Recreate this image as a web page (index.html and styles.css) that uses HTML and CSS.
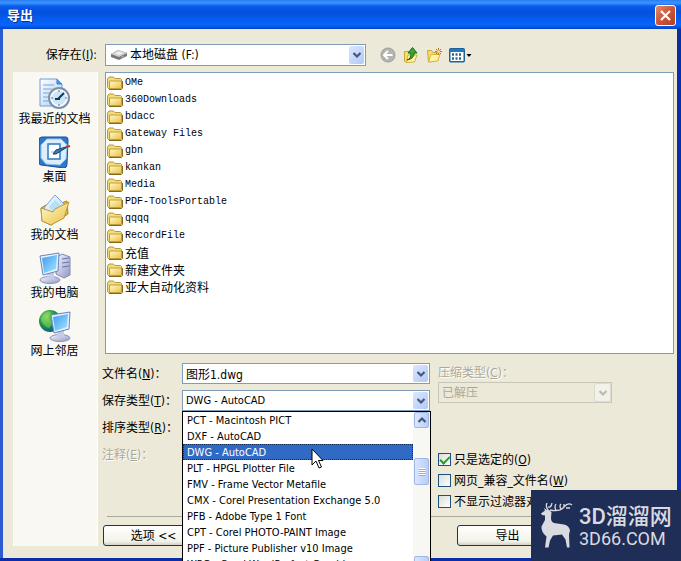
FILE: index.html
```html
<!DOCTYPE html>
<html lang="zh-CN">
<head>
<meta charset="utf-8">
<title>导出</title>
<meta name="viewport" content="width=device-width, initial-scale=1">
<link rel="stylesheet" href="styles.css">
</head>
<body>
<svg class="defs" aria-hidden="true">
  <defs>
    <linearGradient id="gFolder" x1="0" y1="0" x2="1" y2="1"><stop offset="0" stop-color="#fffbc8"/><stop offset="1" stop-color="#e9bf48"/></linearGradient>
    <linearGradient id="gScreen" x1="0" y1="0" x2="1" y2="1"><stop offset="0" stop-color="#3f9bf0"/><stop offset="1" stop-color="#a4e6ff"/></linearGradient>
    <linearGradient id="gPaper" x1="0" y1="0" x2="1" y2="1"><stop offset="0" stop-color="#ffffff"/><stop offset="1" stop-color="#a9cdf3"/></linearGradient>
    <linearGradient id="gMetal" x1="0" y1="0" x2="1" y2="1"><stop offset="0" stop-color="#f5f6ff"/><stop offset="1" stop-color="#8f97c4"/></linearGradient>
    <radialGradient id="gGlobe" cx=".35" cy=".3" r=".8"><stop offset="0" stop-color="#8ee05a"/><stop offset=".5" stop-color="#1f9440"/><stop offset="1" stop-color="#0b4fa0"/></radialGradient>
    <symbol id="folder" viewBox="0 0 16 16">
      <path d="M.5 12.500V4L2 2h4.500L8 3.500h5.500l1 1V12l-1 2H2z" fill="#f3dc7c" stroke="#b8973a"/>
      <path d="M2.500 6h12v6.500l-1 1h-11z" fill="url(#gFolder)" stroke="#c29d3c"/>
      <path d="M15.500 6v7.500l-1.500 1H2" fill="none" stroke="#85691f"/>
    </symbol>
    <symbol id="chevron" viewBox="0 0 10 8"><path d="M1.500 2L5 5.500L8.500 2" fill="none" stroke="currentColor" stroke-width="2.200"/></symbol>
  </defs>
</svg>
<main class="dialog">
  <header class="titlebar">
    <h1>导出</h1>
    <button class="close" type="button" aria-label="关闭"><svg viewBox="0 0 19 19"><path d="M5 5l9 9M14 5l-9 9" stroke="#fff" stroke-width="2.200"/></svg></button>
  </header>
  <form class="body">
    <div class="lookin">
      <label for="place">保存在(<u>I</u>):</label>
      <div class="combo combo-place">
        <svg class="drive" viewBox="0 0 16 10"><path d="M0 4l7-4 9 3v3l-8 4-8-3z" fill="#777"/><path d="M0 4l7-4 9 3-8 4z" fill="#d0d0d0"/><path d="M4 3.500l4-2 4 1.500-4 2z" fill="#f2f2f2"/><path d="M10 7.500l3-1.500" stroke="#8cda70"/></svg>
        <select id="place"><option>本地磁盘 (F:)</option></select>
        <span class="arrow"><svg><use href="#chevron"/></svg></span>
      </div>
      <div class="tools">
        <button type="button" aria-label="后退"><svg viewBox="0 0 16 16"><circle cx="8" cy="8" r="7" fill="#b4b4b0" stroke="#9c9c98"/><path d="M12.500 8H4.500M8 4L4 8l4 4" fill="none" stroke="#fff" stroke-width="2"/></svg></button>
        <button type="button" aria-label="向上"><svg viewBox="0 0 16 16"><path d="M1.500 4.500h4l1 1.500h5v7L3 15.500 1.500 14z" fill="#f9e06c" stroke="#c9a638"/><path d="M3 15.500L5 8h9l-2.500 7z" fill="#fff3a0" stroke="#d3b040"/><path d="M4 13q4-1 4-7H5L9.500.500 14 6h-3q0 6-7 7z" fill="#39a836" stroke="#176c1b"/></svg></button>
        <button type="button" aria-label="新建文件夹"><svg viewBox="0 0 16 16"><path d="M1.500 3.500h4l1.500 2h5v8L2.500 15z" fill="#f7dc68" stroke="#cda43a"/><path d="M2.500 15L5 7.500h9L11.500 14z" fill="#fff5a5" stroke="#d9b348"/><path d="M12.500 1v7M9 4.500h7M10 2l5 5M15 2l-5 5" stroke="#c26c2b"/><circle cx="12.500" cy="4.500" r="1.500" fill="#ffe46c"/></svg></button>
        <button type="button" class="views" aria-label="查看"><svg viewBox="0 0 23 16"><rect x=".75" y="1.750" width="14.500" height="13" rx="1" fill="#fff" stroke="#1c639c" stroke-width="1.500"/><path d="M1 3.500h14" stroke="#2379bb" stroke-width="3"/><path d="M3 7.500h2m1.500 0h2m1.500 0h2M3 11.500h2m1.500 0h2m1.500 0h2" stroke="#2c6290" stroke-width="2.500"/><path d="M17.500 7h5L20 10z" fill="#000"/></svg></button>
      </div>
    </div>
    <div class="work">
      <nav class="places" aria-label="位置">
        <a href="#recent"><svg viewBox="0 0 32 32"><path d="M1 1h17l5 5v22H1z" fill="url(#gPaper)" stroke="#6f9ddb"/><path d="M18 1v5h5" fill="#4f95e2" stroke="#3d7cc9"/><path d="M4 7h11M4 11h9M4 15h6M4 19h5M4 23h5" stroke="#77a5df"/><circle cx="20" cy="20" r="10" fill="#edf7ff" stroke="#7d8fa8" stroke-width="2"/><circle cx="20" cy="20" r="7.500" fill="#c8e7fa" stroke="#fff"/><path d="M25 15l-6 6M16 21h5" stroke="#16394f" stroke-width="2"/><path d="M20 12v2M20 26v2M12 20h2M26 20h2" stroke="#667"/></svg><span>我最近的文档</span></a>
        <a href="#desktop"><svg viewBox="0 0 32 32"><path d="M3 1h24q2 0 2 3l-1 24q0 4-3 4l-23-3q-2 0-2-3V4q0-3 3-3z" fill="#2f79cc" stroke="#1b4f96"/><path d="M8 3h14l6 6-1 14-6 6-14-1-5-6V9z" fill="#dceefb" stroke="#8fc1ed"/><path d="M9 8h12v15H9z" fill="#fff" stroke="#2e78c2" stroke-width="1.500"/><path d="M12 16h5" stroke="#8bbde8"/><path d="M14 18l3-4 13-4-13 8z" fill="#397eb7" stroke="#163d68"/><path d="M27 11l4-1" stroke="#c23b1a" stroke-width="2"/></svg><span>桌面</span></a>
        <a href="#documents"><svg viewBox="0 0 32 32"><path d="M2 14l5-3 3 2 18-6 1 13-17 11-9-4z" fill="#e5bc42" stroke="#a9842d"/><path d="M5 14L16 1l11 11-11 13z" fill="url(#gPaper)" stroke="#79a8d9"/><path d="M10 13l6-7 5 5-6 7z" fill="#b3e1f3"/><path d="M2 14l12 4 2-3 14-7-5 16-13 7-9-4z" fill="url(#gFolder)" stroke="#bf9736"/></svg><span>我的文档</span></a>
        <a href="#computer"><svg viewBox="0 0 32 32"><path d="M18 5l5-3 8 3v18l-6 3-8-4z" fill="url(#gMetal)" stroke="#8389b0"/><path d="M23 7l7-1M23 11l7-1M23 15l7-1" stroke="#6b72a6"/><ellipse cx="11" cy="28" rx="10" ry="3.500" fill="url(#gMetal)" stroke="#8c93bd"/><path d="M8 21h7v6H8z" fill="#c6cbe7"/><path d="M1 4l19-3-1 18-15 4z" fill="#e6f1ff" stroke="#6784b9"/><path d="M3 6l15-3-1 14-12 4z" fill="url(#gScreen)"/></svg><span>我的电脑</span></a>
        <a href="#network"><svg viewBox="0 0 32 32"><circle cx="11" cy="11" r="11" fill="url(#gGlobe)"/><path d="M2 8q5-8 10-6l-3 6 5 5-4 5q-7-2-8-10" fill="#8bd66c" opacity=".55"/><ellipse cx="21" cy="28" rx="10" ry="3.500" fill="url(#gMetal)" stroke="#8c93bd"/><path d="M18 20h7v7h-7z" fill="#c6cbe7"/><path d="M12 5l19-3-1 17-15 4z" fill="#e6f1ff" stroke="#6784b9"/><path d="M14 7l15-3-1 13-12 4z" fill="url(#gScreen)"/></svg><span>网上邻居</span></a>
      </nav>
      <div class="content">
        <ul class="files">
          <li><svg><use href="#folder"/></svg>OMe</li>
          <li><svg><use href="#folder"/></svg>360Downloads</li>
          <li><svg><use href="#folder"/></svg>bdacc</li>
          <li><svg><use href="#folder"/></svg>Gateway Files</li>
          <li><svg><use href="#folder"/></svg>gbn</li>
          <li><svg><use href="#folder"/></svg>kankan</li>
          <li><svg><use href="#folder"/></svg>Media</li>
          <li><svg><use href="#folder"/></svg>PDF-ToolsPortable</li>
          <li><svg><use href="#folder"/></svg>qqqq</li>
          <li><svg><use href="#folder"/></svg>RecordFile</li>
          <li class="cjk"><svg><use href="#folder"/></svg>充值</li>
          <li class="cjk"><svg><use href="#folder"/></svg>新建文件夹</li>
          <li class="cjk"><svg><use href="#folder"/></svg>亚大自动化资料</li>
        </ul>
        <div class="options">
          <div class="fields">
            <label for="name">文件名(<u>N</u>)：</label>
            <div class="combo"><input id="name" type="text" value="图形1.dwg"><span class="arrow"><svg><use href="#chevron"/></svg></span></div>
            <label for="type">保存类型(<u>T</u>)：</label>
            <div class="combo">
              <select id="type"><option>DWG - AutoCAD</option></select>
              <span class="arrow"><svg><use href="#chevron"/></svg></span>
              <div class="popup">
                <ul role="listbox" aria-label="保存类型">
                  <li role="option">PCT - Macintosh PICT</li>
                  <li role="option">DXF - AutoCAD</li>
                  <li role="option" class="current" aria-selected="true">DWG - AutoCAD</li>
                  <li role="option">PLT - HPGL Plotter File</li>
                  <li role="option">FMV - Frame Vector Metafile</li>
                  <li role="option">CMX - Corel Presentation Exchange 5.0</li>
                  <li role="option">PFB - Adobe Type 1 Font</li>
                  <li role="option">CPT - Corel PHOTO-PAINT Image</li>
                  <li role="option">PPF - Picture Publisher v10 Image</li>
                  <li role="option">WPG - Corel WordPerfect Graphic</li>
                </ul>
                <div class="scroll">
                  <span class="step up"><svg><use href="#chevron"/></svg></span>
                  <span class="thumb"></span>
                  <span class="step down"><svg><use href="#chevron"/></svg></span>
                </div>
                <svg class="cursor" viewBox="0 0 13 21"><path d="M1 1v16l4-4 3 7 2.500-1-3-6.500H12z" fill="#fff" stroke="#000"/></svg>
              </div>
            </div>
            <span class="label">排序类型(<u>R</u>)：</span><span></span>
            <span class="label off">注释(<u>E</u>)：</span><span></span>
          </div>
          <div class="extras">
            <label class="off" for="zip">压缩类型(<u>C</u>)：</label>
            <div class="combo disabled"><select id="zip" disabled><option>已解压</option></select><span class="arrow"><svg><use href="#chevron"/></svg></span></div>
            <div class="checks">
              <label><input type="checkbox" checked>只是选定的(<u>O</u>)</label>
              <label><input type="checkbox">网页_兼容_文件名(<u>W</u>)</label>
              <label><input type="checkbox">不显示过滤器对话框</label>
            </div>
          </div>
        </div>
        <hr>
        <div class="actions">
          <button type="button">选项 &lt;&lt;</button>
          <button type="button">导出</button>
        </div>
      </div>
    </div>
  </form>
</main>
<aside class="brand">
  <svg viewBox="0 0 32 45">
    <path d="M0 10.500L4 7.500 3 5l3 2q3 0 4.500 2L10 15q0 4 3 5l10 1.500q5 1 6 6l-1 4 .5 13H26l-1.500-8-3.500-5-9 1-3 5-1.500 7H4l1.500-11Q0 29 .5 23.500L4 17v-4.500L1 12z" fill="#d9dbe0"/>
    <path d="M8 8Q4 4 6 0M7 4Q10 5 11 0M9 7Q19 9 23 4T31 2M15 7Q13 4 15 1M20 6Q18 3 20 1M23 4V1M25 5l4 0" fill="none" stroke="#d9dbe0" stroke-width="1.300"/>
  </svg>
  <p><strong>3D溜溜网</strong><span>3D66.COM</span></p>
</aside>
</body>
</html>
```
FILE: styles.css
```css
* { box-sizing: border-box; }
html, body { margin: 0; }
body {
  min-height: 100vh;
  overflow: hidden;
  position: relative;
  font: 12px/16px "DejaVu Sans Condensed", "Noto Sans CJK SC", sans-serif;
  color: #000;
}
button, input, select { font: inherit; color: inherit; margin: 0; }
ul { list-style: none; margin: 0; padding: 0; }
.defs { position: absolute; width: 0; height: 0; }

.dialog { min-height: 100vh; display: flex; flex-direction: column; background: #0a2da8; }
.titlebar {
  height: 29px;
  padding: 2px 5px 0 7px;
  display: flex;
  align-items: center;
  justify-content: space-between;
  background: linear-gradient(#2a7df5 0, #3d95ff 3px, #0a5cec 6px, #0450dc 12px, #0560f5 21px, #0566ff 25px, #0243c0 29px);
}
.titlebar h1 { margin: 0; font-size: 13px; color: #fff; text-shadow: 1px 1px #0a2f8c; }
.close {
  width: 21px;
  height: 21px;
  padding: 0;
  border: 1px solid #fff;
  border-radius: 3px;
  background: linear-gradient(135deg, #e08c70, #cc5436 50%, #b0402a);
}
.close svg { display: block; width: 19px; height: 19px; }

.body {
  flex: 1;
  display: flex;
  flex-direction: column;
  gap: 6px;
  margin: 0 4px 3px 3px;
  padding: 14px 3px 12px 10px;
  background: #ece9d8;
  border-top: 1px solid #e3e8f0;
  box-shadow: -3px 0 #2a5bd2;
}
.lookin { display: flex; align-items: center; height: 22px; }
.lookin > label { width: 84px; margin-right: 8px; text-align: right; }
.combo { position: relative; height: 21px; }
.combo-place { width: 261px; height: 22px; margin-right: 14px; }
.combo select, .combo input {
  appearance: none;
  display: block;
  width: 100%;
  height: 100%;
  padding: 0 20px 0 3px;
  border: 1px solid #7f9db9;
  border-radius: 0;
  background: #fff;
  outline: none;
  opacity: 1;
}
.combo-place select { padding-left: 24px; }
#type { font-size: 11px; }
.drive { position: absolute; left: 6px; top: 6px; width: 16px; height: 10px; }
.arrow {
  position: absolute;
  top: 2px;
  right: 2px;
  bottom: 2px;
  width: 15px;
  display: grid;
  place-items: center;
  border-radius: 2px;
  color: #3f587c;
  background: linear-gradient(135deg, #dce7fe, #b2c8f6);
  pointer-events: none;
}
.arrow svg, .step svg { width: 10px; height: 8px; }
.tools { display: flex; gap: 7px; }
.tools button { width: 16px; height: 16px; padding: 0; border: 0; background: none; }
.tools .views { width: 23px; }
.tools svg { display: block; width: 100%; height: 16px; }

.work { flex: 1; display: grid; grid-template-columns: 85px minmax(0, 1fr); gap: 4px; }
.places {
  display: flex;
  flex-direction: column;
  gap: 8px;
  padding-top: 6px;
  background: #f9f8f3;
  border: solid #fff;
  border-width: 0 1px;
}
.places a { display: flex; flex-direction: column; align-items: center; gap: 1px; padding: 0 2px 1px 0; color: #000; text-decoration: none; white-space: nowrap; }
.places svg { width: 32px; height: 32px; }

.content { display: flex; flex-direction: column; }
.files {
  flex: 1;
  margin-left: 3px;
  padding: 1px;
  border: 1px solid #7f9db9;
  background: #fff;
  font: 10px/17px "Liberation Mono", monospace;
}
.files li { display: flex; align-items: center; gap: 2px; height: 17px; }
.files svg { width: 16px; height: 16px; }
.files .cjk { font: 12px/16px "Noto Sans CJK SC", sans-serif; }

.options { display: grid; grid-template-columns: 328px minmax(0, 1fr); gap: 8px; padding-top: 9px; }
.fields { display: grid; grid-template-columns: 80px 248px; grid-auto-rows: 21px; gap: 6px 0; align-content: start; align-items: center; }
.extras > label { display: block; height: 19px; line-height: 20px; }
.extras .combo { width: 174px; }
.off { color: #aca899; text-shadow: 1px 1px #fff; }
.disabled select { background: #ece9d8; border-color: #c9c7ba; color: #aca899; }
.disabled .arrow { background: #f3f2ea; color: #bdbbae; box-shadow: 0 0 0 1px #dddbd0; }
.checks { margin-top: 46px; }
.checks label { display: flex; align-items: center; height: 21px; white-space: nowrap; }
.checks input {
  appearance: none;
  width: 13px;
  height: 13px;
  margin-right: 3px;
  border: 1px solid #1c5180;
  background: linear-gradient(135deg, #dcdcd7, #fff);
  display: grid;
  place-items: center;
}
.checks input:checked::before {
  content: "";
  width: 8px;
  height: 4px;
  border: solid #21a121;
  border-width: 0 0 2px 2px;
  transform: translateY(-1px) rotate(-45deg);
}
hr { margin: 4px 0 8px 5px; align-self: stretch; border: 0; border-top: 1px solid #aca899; }
.actions { display: flex; justify-content: space-between; padding: 0 116px 0 1px; }
.actions button {
  width: 101px;
  height: 21px;
  padding: 0;
  border: 1px solid #003c74;
  border-radius: 3px;
  background: linear-gradient(#fff, #f3f2ea 80%, #d8d0c4);
}

.popup {
  position: absolute;
  z-index: 2;
  top: 21px;
  left: 0;
  right: -1px;
  display: flex;
  border: 1px solid #000;
  background: #fff;
  font-size: 11px;
}
.popup ul { flex: 1; }
.popup li { height: 16px; padding-left: 4px; line-height: 18px; white-space: nowrap; }
.popup .current { background: #316ac5; color: #fff; outline: 1px dotted #122d5c; outline-offset: -1px; }
.scroll { width: 17px; padding: 0 1px; display: flex; flex-direction: column; background: #f7f7f3; }
.step, .thumb { display: grid; place-items: center; height: 16px; border: 1px solid #9fb6e6; border-radius: 2px; background: linear-gradient(90deg, #dbe6fe, #b9cdf8); color: #3f587c; }
.up svg { transform: rotate(180deg); }
.thumb { height: 27px; margin: 30px 0 auto; }
.thumb::before { content: ""; width: 6px; height: 8px; background: repeating-linear-gradient(#fff 0, #fff 1px, #8cabeb 1px, #8cabeb 2px); }
.cursor { position: absolute; left: 128px; top: 36px; width: 13px; height: 21px; }

.brand {
  position: absolute;
  z-index: 3;
  right: 0;
  bottom: 0;
  width: 150px;
  height: 71px;
  display: flex;
  gap: 6px;
  align-items: center;
  padding-left: 10px;
  background: #1f2e57;
  color: #d9dbe0;
}
.brand svg { width: 32px; height: 45px; }
.brand p { margin: 0; }
.brand strong { display: block; font: 500 22px/26px Roboto, "Noto Sans CJK SC", sans-serif; }
.brand span { display: block; font: 18px/18px Roboto, sans-serif; }
```
